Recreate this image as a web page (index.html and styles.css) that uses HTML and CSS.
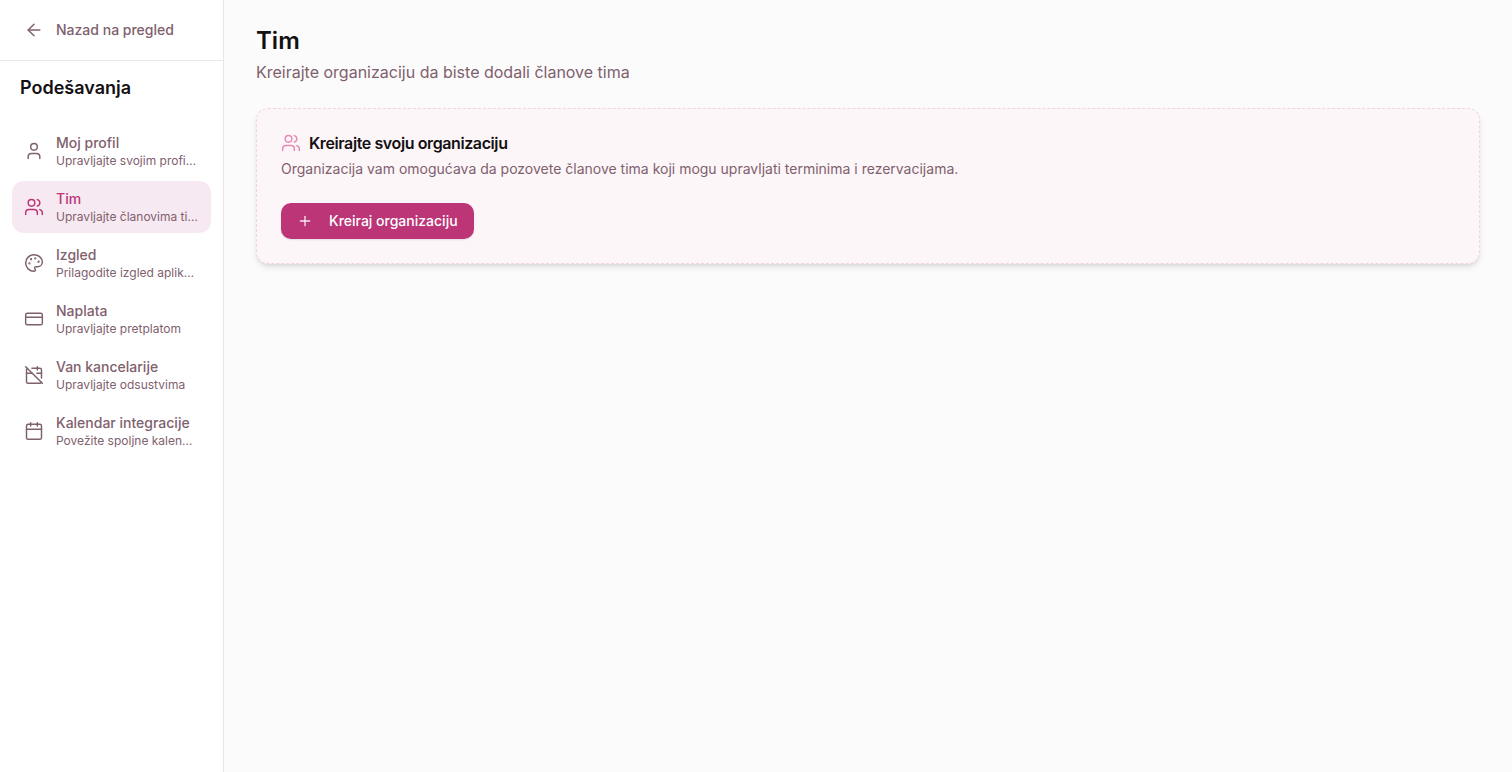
FILE: index.html
```html
<!DOCTYPE html>
<html lang="sr">
<head>
    <meta charset="UTF-8">
    <meta name="viewport" content="width=device-width, initial-scale=1.0">
    <title>Tim</title>
    <link rel="stylesheet" href="styles.css">
</head>
<body>
    <aside class="sidebar">
        <a href="#" class="back-link">
            <svg class="icon" viewBox="0 0 24 24"><path d="m12 19-7-7 7-7"/><path d="M19 12H5"/></svg>
            <span>Nazad na pregled</span>
        </a>
        <h2 class="sidebar-title">Podešavanja</h2>
        <nav class="nav">
            <a href="#" class="nav-item">
                <svg class="icon" viewBox="0 0 24 24"><path d="M19 21v-2a4 4 0 0 0-4-4H9a4 4 0 0 0-4 4v2"/><circle cx="12" cy="7" r="4"/></svg>
                <span class="nav-text">
                    <span class="nav-label">Moj profil</span>
                    <span class="nav-desc">Upravljajte svojim profilom</span>
                </span>
            </a>
            <a href="#" class="nav-item active">
                <svg class="icon" viewBox="0 0 24 24"><path d="M16 21v-2a4 4 0 0 0-4-4H6a4 4 0 0 0-4 4v2"/><circle cx="9" cy="7" r="4"/><path d="M22 21v-2a4 4 0 0 0-3-3.87"/><path d="M16 3.13a4 4 0 0 1 0 7.75"/></svg>
                <span class="nav-text">
                    <span class="nav-label">Tim</span>
                    <span class="nav-desc">Upravljajte članovima tima</span>
                </span>
            </a>
            <a href="#" class="nav-item">
                <svg class="icon" viewBox="0 0 24 24"><circle cx="13.5" cy="6.5" r=".5" fill="currentColor"/><circle cx="17.5" cy="10.5" r=".5" fill="currentColor"/><circle cx="8.5" cy="7.5" r=".5" fill="currentColor"/><circle cx="6.5" cy="12.5" r=".5" fill="currentColor"/><path d="M12 2C6.5 2 2 6.5 2 12s4.5 10 10 10c.926 0 1.648-.746 1.648-1.688 0-.437-.18-.835-.437-1.125-.29-.289-.438-.652-.438-1.125a1.64 1.64 0 0 1 1.668-1.668h1.996c3.051 0 5.555-2.503 5.555-5.554C21.965 6.012 17.461 2 12 2z"/></svg>
                <span class="nav-text">
                    <span class="nav-label">Izgled</span>
                    <span class="nav-desc">Prilagodite izgled aplikacije</span>
                </span>
            </a>
            <a href="#" class="nav-item">
                <svg class="icon" viewBox="0 0 24 24"><rect width="20" height="14" x="2" y="5" rx="2"/><line x1="2" x2="22" y1="10" y2="10"/></svg>
                <span class="nav-text">
                    <span class="nav-label">Naplata</span>
                    <span class="nav-desc">Upravljajte pretplatom</span>
                </span>
            </a>
            <a href="#" class="nav-item">
                <svg class="icon" viewBox="0 0 24 24"><path d="M4.2 4.2A2 2 0 0 0 3 6v14a2 2 0 0 0 2 2h14a2 2 0 0 0 1.82-1.18"/><path d="M21 15.5V6a2 2 0 0 0-2-2H9.5"/><path d="M16 2v4"/><path d="M3 10h7"/><path d="M21 10h-5.5"/><path d="m2 2 20 20"/></svg>
                <span class="nav-text">
                    <span class="nav-label">Van kancelarije</span>
                    <span class="nav-desc">Upravljajte odsustvima</span>
                </span>
            </a>
            <a href="#" class="nav-item">
                <svg class="icon" viewBox="0 0 24 24"><path d="M8 2v4"/><path d="M16 2v4"/><rect width="18" height="18" x="3" y="4" rx="2"/><path d="M3 10h18"/></svg>
                <span class="nav-text">
                    <span class="nav-label">Kalendar integracije</span>
                    <span class="nav-desc">Povežite spoljne kalendare</span>
                </span>
            </a>
        </nav>
    </aside>

    <main class="content">
        <h1>Tim</h1>
        <p class="subtitle">Kreirajte organizaciju da biste dodali članove tima</p>

        <section class="card">
            <div class="card-title">
                <svg class="icon" viewBox="0 0 24 24"><path d="M16 21v-2a4 4 0 0 0-4-4H6a4 4 0 0 0-4 4v2"/><circle cx="9" cy="7" r="4"/><path d="M22 21v-2a4 4 0 0 0-3-3.87"/><path d="M16 3.13a4 4 0 0 1 0 7.75"/></svg>
                <h3>Kreirajte svoju organizaciju</h3>
            </div>
            <p class="card-text">Organizacija vam omogućava da pozovete članove tima koji mogu upravljati terminima i rezervacijama.</p>
            <button class="btn">
                <svg class="btn-icon" viewBox="0 0 24 24"><path d="M5 12h14"/><path d="M12 5v14"/></svg>
                <span>Kreiraj organizaciju</span>
            </button>
        </section>
    </main>
</body>
</html>
```

FILE: styles.css
```css
:root {
    --primary: #bb3577;
    --muted: #7f606d;
    --border: #e9e6e8;
    --page-bg: #fbfbfb;
    --ink: #141012;
}

* {
    margin: 0;
    padding: 0;
    box-sizing: border-box;
}

html, body {
    height: 100%;
    overflow: hidden;
}

body {
    display: flex;
    background-color: var(--page-bg);
    font-family: 'Inter', sans-serif;
    color: var(--ink);
}

a {
    text-decoration: none;
    color: inherit;
}

.icon {
    width: 20px;
    height: 20px;
    flex-shrink: 0;
    fill: none;
    stroke: currentColor;
    stroke-width: 1.75;
    stroke-linecap: round;
    stroke-linejoin: round;
}

/* Sidebar */
.sidebar {
    width: 224px;
    height: 100%;
    flex-shrink: 0;
    background-color: #fff;
    border-right: 1px solid var(--border);
}

.back-link {
    display: flex;
    align-items: center;
    gap: 12px;
    height: 61px;
    padding: 0 24px 1px;
    border-bottom: 1px solid var(--border);
    color: var(--muted);
    font-size: 14px;
    font-weight: 500;
}

.sidebar-title {
    padding: 16px 20px 0;
    font-size: 18px;
    line-height: 22px;
    font-weight: 600;
}

.nav {
    display: flex;
    flex-direction: column;
    gap: 4px;
    padding: 26px 12px 0;
}

.nav-item {
    display: flex;
    align-items: center;
    gap: 12px;
    height: 52px;
    padding: 0 12px;
    border-radius: 12px;
    color: var(--muted);
}

.nav-item.active {
    background-color: #f7e9f1;
    color: var(--primary);
}

.nav-text {
    display: flex;
    flex-direction: column;
    min-width: 0;
}

.nav-label {
    font-size: 14px;
    line-height: 20px;
    font-weight: 500;
}

.nav-desc {
    font-size: 12px;
    line-height: 16px;
    color: var(--muted);
    white-space: nowrap;
    overflow: hidden;
    text-overflow: ellipsis;
}

/* Main content */
.content {
    flex-grow: 1;
    padding: 25px 32px 24px;
}

h1 {
    font-size: 24px;
    line-height: 32px;
    font-weight: 600;
}

.subtitle {
    margin-top: 3px;
    font-size: 16px;
    line-height: 24px;
    color: var(--muted);
}

.card {
    margin-top: 24px;
    padding: 24px;
    height: 156px;
    background-color: #fcf6f9;
    border: 1px dashed #f3d3e2;
    border-radius: 12px;
    box-shadow: 0 4px 6px -1px rgba(0, 0, 0, 0.1), 0 2px 4px -2px rgba(0, 0, 0, 0.1);
}

.card-title {
    display: flex;
    align-items: center;
    gap: 8px;
    color: #e58ab5;
}

.card-title h3 {
    font-size: 16px;
    line-height: 20px;
    font-weight: 600;
    letter-spacing: -0.4px;
    color: var(--ink);
}

.card-text {
    margin-top: 6px;
    font-size: 14px;
    line-height: 20px;
    color: var(--muted);
}

.btn {
    display: flex;
    align-items: center;
    gap: 16px;
    height: 36px;
    margin-top: 24px;
    padding: 0 16px 1px;
    background-color: var(--primary);
    border: none;
    border-radius: 10px;
    color: #fff;
    font-family: inherit;
    font-size: 14px;
    font-weight: 500;
    box-shadow: 0 1px 2px rgba(0, 0, 0, 0.1);
}

.btn-icon {
    width: 16px;
    height: 16px;
    fill: none;
    stroke: #fff;
    stroke-opacity: 0.85;
    stroke-width: 2;
    stroke-linecap: round;
}
```
